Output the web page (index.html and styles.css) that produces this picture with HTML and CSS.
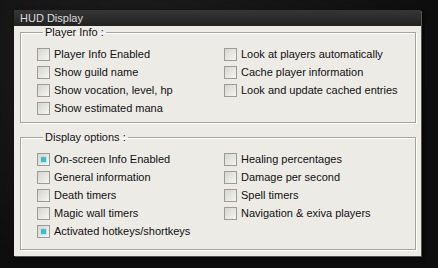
FILE: index.html
```html
<!DOCTYPE html>
<html>
<head>
    <title>HUD Display</title>
    <meta charset="UTF-8">
    <link rel="stylesheet" href="styles.css">
</head>
<body>
    <div class="window">
        <div class="titlebar">HUD Display</div>
        <div class="content">
            <fieldset class="group">
                <legend>Player Info :</legend>
                <div class="options">
                    <label class="opt"><span class="box"></span>Player Info Enabled</label>
                    <label class="opt"><span class="box"></span>Look at players automatically</label>
                    <label class="opt"><span class="box"></span>Show guild name</label>
                    <label class="opt"><span class="box"></span>Cache player information</label>
                    <label class="opt"><span class="box"></span>Show vocation, level, hp</label>
                    <label class="opt"><span class="box"></span>Look and update cached entries</label>
                    <label class="opt"><span class="box"></span>Show estimated mana</label>
                </div>
            </fieldset>
            <fieldset class="group display">
                <legend>Display options :</legend>
                <div class="options">
                    <label class="opt"><span class="box checked"></span>On-screen Info Enabled</label>
                    <label class="opt"><span class="box"></span>Healing percentages</label>
                    <label class="opt"><span class="box"></span>General information</label>
                    <label class="opt"><span class="box"></span>Damage per second</label>
                    <label class="opt"><span class="box"></span>Death timers</label>
                    <label class="opt"><span class="box"></span>Spell timers</label>
                    <label class="opt"><span class="box"></span>Magic wall timers</label>
                    <label class="opt"><span class="box"></span>Navigation &amp; exiva players</label>
                    <label class="opt"><span class="box checked"></span>Activated hotkeys/shortkeys</label>
                </div>
            </fieldset>
        </div>
    </div>
</body>
</html>
```

FILE: styles.css
```css
body {
    margin: 0;
    padding: 10px 0 0 14px;
    min-height: 268px;
    box-sizing: border-box;
    background: radial-gradient(ellipse at 30% 20%, #1c1c1c, #0e0e0e 70%);
    font-family: 'Liberation Sans', Arial, sans-serif;
    font-size: 11px;
    color: #111;
}
.window {
    width: 407px;
    box-shadow: 1px 1px 0 #555, 2px 2px 4px rgba(0, 0, 0, 0.8);
}
.titlebar {
    height: 16px;
    line-height: 16px;
    padding-left: 6px;
    background: linear-gradient(to bottom, #363636, #222);
    color: #dcdcdc;
    font-size: 11px;
}
.content {
    background: #ecebe6;
    padding: 0 5px 6px 6px;
}
.group {
    margin: 0;
    padding: 6px 0 5px 16px;
    border: 1px solid #a4a49e;
    box-shadow: 1px 1px 0 #fff, inset 1px 1px 0 #fff;
}
.group.display {
    margin-top: 8px;
    padding-bottom: 9px;
}
.group legend {
    margin-left: 6px;
    padding: 0 2px;
    line-height: 13px;
}
.options {
    display: grid;
    grid-template-columns: 187px 1fr;
    grid-auto-rows: 18px;
}
.opt {
    display: flex;
    align-items: center;
    gap: 4px;
    white-space: nowrap;
}
.box {
    width: 11px;
    height: 11px;
    border: 1px solid #9c9c96;
    background: linear-gradient(135deg, #d6d5ce, #f6f6f2);
    display: flex;
    align-items: center;
    justify-content: center;
    flex: none;
}
.box.checked::after {
    content: "";
    width: 5px;
    height: 5px;
    background: #3dbfcb;
    box-shadow: 0 0 0 1px #bfe6ea;
}
```
